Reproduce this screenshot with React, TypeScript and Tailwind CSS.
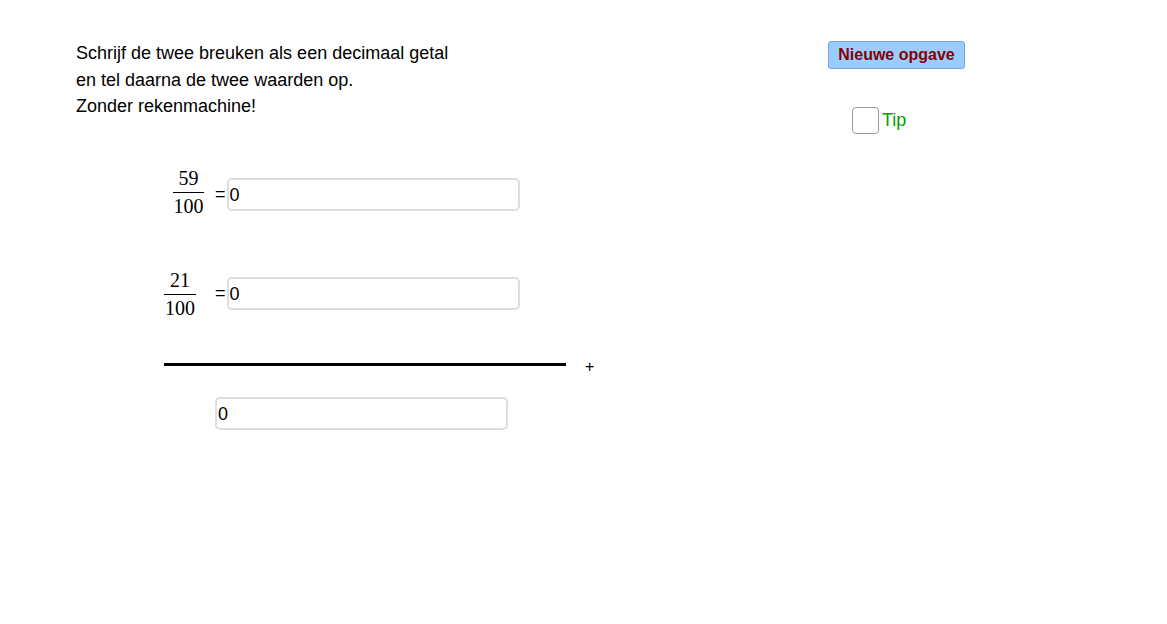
import React from 'react';

const Fraction = ({ num, den, className }: { num: string; den: string; className: string }) => (
  <div className={`flex flex-col items-center font-['Liberation_Serif',serif] text-[20px] leading-none text-black ${className}`}>
    <span className="pb-[4px]">{num}</span>
    <span className="h-px w-full bg-black" />
    <span className="pt-[3px]">{den}</span>
  </div>
);

const Field = () => (
  <div className="flex h-[33px] w-[293px] items-center rounded-[5px] border-2 border-[#dedede] bg-white pl-[1px] pt-[2px] text-[18px] text-black">
    0
  </div>
);

const App: React.FC = () => {
  return (
    <div className="flex h-[624px] w-[1167px] overflow-hidden bg-white pt-[40px] font-['Liberation_Sans',Arial,sans-serif]">
      {/* left: opgave */}
      <div className="flex w-[828px] shrink-0 flex-col pl-[76px]">
        <div className="text-[18px] leading-[26.5px] text-black">
          <p>Schrijf de twee breuken als een decimaal getal</p>
          <p>en tel daarna de twee waarden op.</p>
          <p>Zonder rekenmachine!</p>
        </div>

        <div className="mt-[51px] ml-[97px] flex items-center">
          <Fraction num="59" den="100" className="w-[31px] -translate-y-[3px]" />
          <span className="ml-[11px] mr-[1px] text-[18px] text-black">=</span>
          <Field />
        </div>

        <div className="mt-[51px] ml-[88px] flex items-center">
          <Fraction num="21" den="100" className="w-[32px]" />
          <span className="ml-[19px] mr-[1px] text-[18px] text-black">=</span>
          <Field />
        </div>

        <div className="mt-[38px] ml-[88px] flex h-[18px] items-center">
          <div className="h-[3px] w-[402px] bg-black" />
          <span className="ml-[19px] mt-[5px] text-[16px] leading-none text-black">+</span>
        </div>

        <div className="mt-[23px] ml-[139px]">
          <Field />
        </div>
      </div>

      {/* right: knoppen */}
      <div className="flex flex-col items-start">
        <button className="mt-[1px] flex h-[28px] w-[137px] items-center justify-center rounded-[3px] border border-[#7aa6dc] bg-[#99ccff] text-[16px] font-bold text-[#880000]">
          Nieuwe opgave
        </button>
        <label className="mt-[38px] ml-[24px] flex items-center gap-[3px]">
          <span className="h-[27px] w-[27px] rounded-[4px] border-[1.5px] border-[#9a9a9a] bg-white" />
          <span className="text-[18px] text-[#00a000]">Tip</span>
        </label>
      </div>
    </div>
  );
};

export default App;
